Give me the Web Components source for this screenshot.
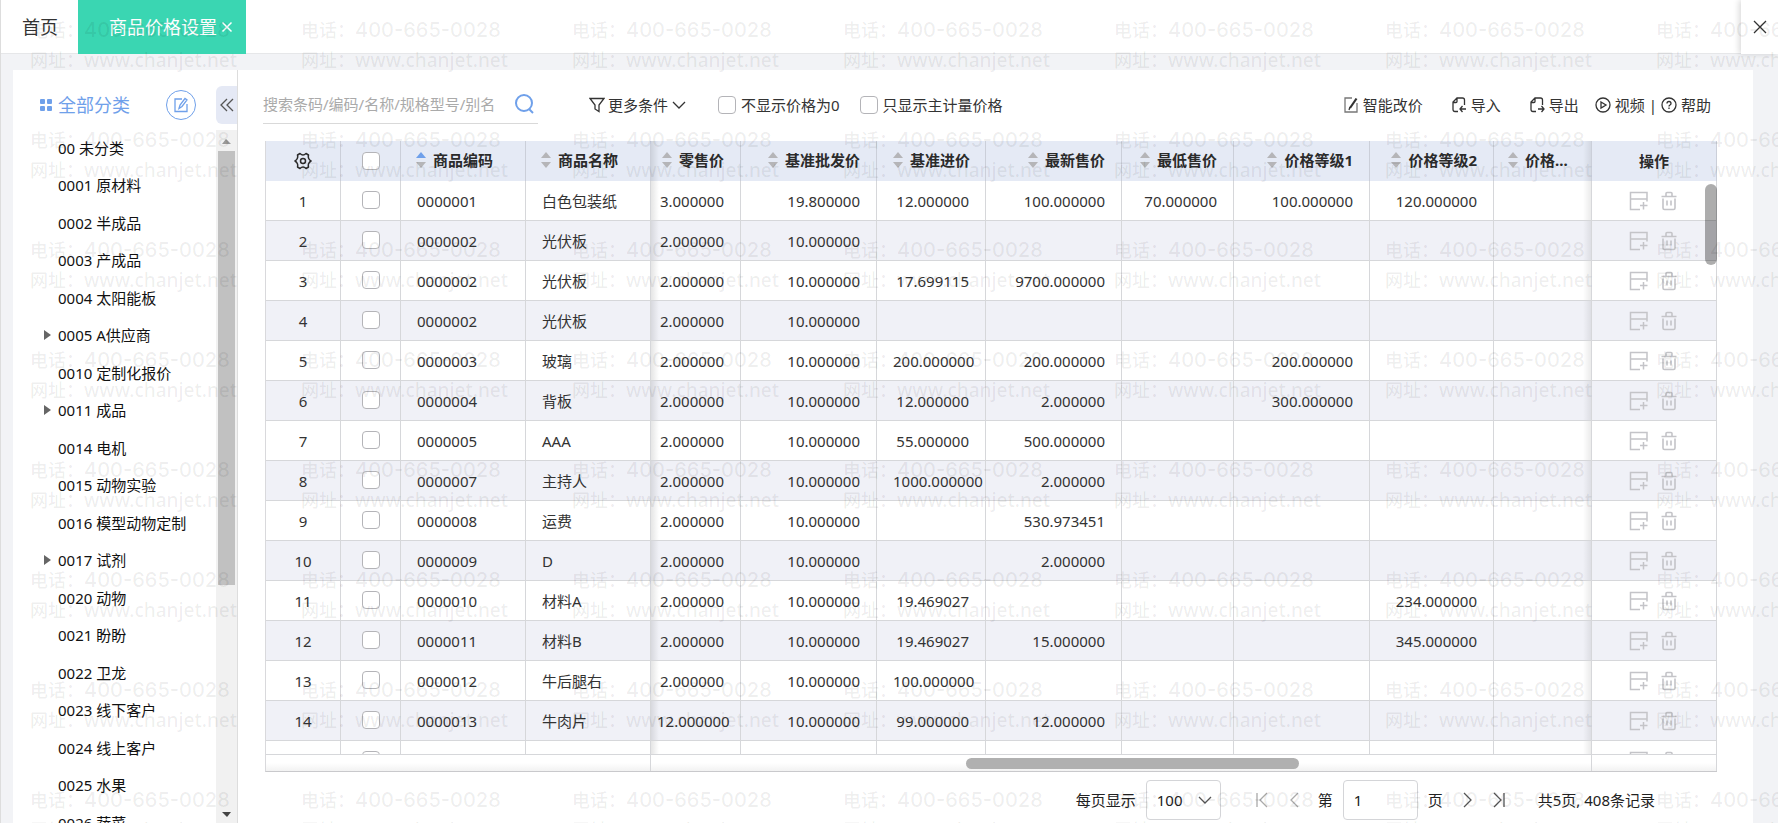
<!DOCTYPE html>
<html lang="zh-CN">
<head>
    <meta charset="UTF-8">
    <meta name="viewport" content="width=device-width, initial-scale=1.0">
    <title>商品价格设置</title>
    <style>
        body {
            margin: 0;
            height: 100vh;
            overflow: hidden;
            font: 15px/20px "Noto Sans", "Noto Sans CJK SC", sans-serif;
            color: #333;
        }
    </style>
</head>
<body>

<price-app></price-app>

<script>
const ICONS = {
    close: [16, '<path d="M2 2l12 12M14 2L2 14"/>'],
    grid: [12, '<g fill="currentColor" stroke="none"><rect width="5" height="5" rx="1"/><rect x="7" width="5" height="5" rx="1"/><rect y="7" width="5" height="5" rx="1"/><rect x="7" y="7" width="5" height="5" rx="1"/></g>'],
    edit: [16, '<path d="M9 2H2v12.500h12V7M6 11.500l1-3.500 5-6.500 2 1.500-5 6.500z"/>'],
    collapse: [16, '<path d="M8 2L2 8l6 6M14 2L8 8l6 6"/>'],
    search: [20, '<circle cx="10" cy="9" r="8"/><path d="M15 15l4 4"/>'],
    filter: [16, '<path d="M1 1.500h14L10 8v6.500L6 12V8z"/>'],
    down: [16, '<path d="M2 5l6 6 6-6"/>'],
    reprice: [16, '<path d="M9 1H2v14h12V6" stroke="#777"/><path stroke-width="2.200" d="M13.500 1.500L7 11"/><path d="M7 10l-1 3"/>'],
    import: [16, '<path d="M7 14.500H4q-2 0-2-2V5l4-4h5.500q2 0 2 2v5M2 5.500h3q1 0 1-1V1"/><path d="M15 12H9M11.500 9L9 12l2.500 3"/>'],
    export: [16, '<path d="M7 14.500H4q-2 0-2-2V5l4-4h5.500q2 0 2 2v5M2 5.500h3q1 0 1-1V1"/><path d="M9 12h6M12.500 9l2.500 3-2.500 3"/>'],
    video: [16, '<circle cx="8" cy="8" r="7"/><path d="M6 5l5 3-5 3z"/>'],
    help: [16, '<circle cx="8" cy="8" r="7"/><path d="M6 6.500q0-2 2-2t2 2q0 1-1 1.500t-1 1.500M8 10.500v1.500"/>'],
    gear: [18, '<path stroke-width="1.500" stroke-linejoin="round" d="M6 1.500q1.500 1.500 3 1.500t3-1.500L14.500 3q-.500 2 .200 3.500T17 9q-1.600 1-2.300 2.500t-.200 3.500L12 16.500Q10.500 15 9 15t-3 1.500L3.500 15q.500-2-.200-3.500T1 9q1.600-1 2.300-2.500T3.500 3z"/><circle stroke-width="1.500" cx="9" cy="9" r="2.500"/>'],
    addRow: [20, '<path stroke-width="1.500" d="M18 10.500V1.500H1.500v17H11M1.500 8H18M14.500 11v7.500M11 14.500h7.500"/>'],
    trash: [20, '<path stroke-width="1.600" d="M2.500 5.500h15M7 5V2.500q0-1 1-1h4q1 0 1 1V5M4 7.500V17q0 1.500 1.500 1.500h9Q16 18.500 16 17V7.500M8 9.500v5M12 9.500v5"/>'],
    first: [16, '<path d="M3 1v14M13 1L6 8l7 7"/>'],
    prev: [16, '<path d="M12 1L5 8l7 7"/>'],
    next: [16, '<path d="M5 1l7 7-7 7"/>'],
    last: [16, '<path d="M3 1l7 7-7 7M13 1v14"/>']
};

const icon = (name, size) => {
    const [box, body] = ICONS[name];
    return `<svg width="${size || box}" height="${size || box}" viewBox="0 0 ${box} ${box}" fill="none" stroke="currentColor" stroke-width="1.3" aria-hidden="true">${body}</svg>`;
};

// resets shared by every shadow root
const BASE = `
    * { box-sizing: border-box; }
    svg { display: block; flex: none; }
    button { font: inherit; color: inherit; background: none; border: 0; margin: 0; padding: 0; cursor: pointer; }
    a { color: inherit; text-decoration: none; }
    input[type=checkbox] { appearance: none; display: block; flex: none; width: 18px; height: 18px; margin: 0; border: 1px solid #b4b4b8; border-radius: 4px; background: #fff; }
    input[type=checkbox]:checked { background: #6fa0ea; }
`;

class BaseElement extends HTMLElement {
    constructor() {
        super();
        this.attachShadow({ mode: 'open' }).innerHTML = `<style>${BASE}${this.styles()}</style>${this.markup()}`;
    }
}

class CheckOption extends BaseElement {
    styles() {
        return `
            :host { display: block; }
            label { display: flex; align-items: center; gap: 5px; white-space: nowrap; }
        `;
    }
    markup() {
        return '<label><input type="checkbox"><slot></slot></label>';
    }
}

class ToolLink extends BaseElement {
    styles() {
        return `
            :host { display: block; }
            a { display: flex; align-items: center; gap: 4px; white-space: nowrap; }
        `;
    }
    markup() {
        return `<a href="#">${icon(this.getAttribute('icon'))}<slot></slot></a>`;
    }
}

class TabBar extends BaseElement {
    styles() {
        return `
            :host { display: flex; height: 54px; font-size: 18px; background: #fff; border-bottom: 1px solid #e6e7e9; }
            .home { display: flex; align-items: center; width: 77px; padding-left: 21px; }
            .tab { display: flex; align-items: center; gap: 4px; height: 54px; width: 168px; padding-left: 31px; background: #3ad6b2; color: #fff; white-space: nowrap; }
            .tab svg { stroke-width: 2; }
            .exit { display: grid; place-items: center; width: 37px; height: 54px; margin-left: auto; background: #fff; box-shadow: -2px 0 6px rgba(0, 0, 0, .15); }
        `;
    }
    markup() {
        return `
            <a class="home" href="#">首页</a>
            <div class="tab"><a href="#">商品价格设置</a><button aria-label="关闭标签">${icon('close', 12)}</button></div>
            <button class="exit" aria-label="退出">${icon('close')}</button>
        `;
    }
}

const CATEGORIES = [
    '00 未分类', '0001 原材料', '0002 半成品', '0003 产成品', '0004 太阳能板', '+0005 A供应商',
    '0010 定制化报价', '+0011 成品', '0014 电机', '0015 动物实验', '0016 模型动物定制', '+0017 试剂',
    '0020 动物', '0021 盼盼', '0022 卫龙', '0023 线下客户', '0024 线上客户', '0025 水果', '0026 蔬菜'
];

class CategoryTree extends BaseElement {
    styles() {
        return `
            :host { display: flex; flex-direction: column; width: 225px; flex: none; background: #fff; border-right: 1px solid #ddd; }
            header { display: flex; align-items: center; height: 60px; padding: 10px 0 0 27px; color: #6fa0ea; }
            h2 { flex: 1; margin: 0 0 0 6px; font-size: 18px; font-weight: 400; }
            .edit { display: grid; place-items: center; width: 30px; height: 30px; border: 1px solid; border-radius: 50%; margin-right: 20px; }
            .fold { display: grid; place-items: center; width: 21px; height: 38px; background: #e5e9f5; border-radius: 6px 0 0 6px; color: #555; }
            .body { display: flex; flex: 1; min-height: 0; }
            ul { flex: 1; display: grid; grid-auto-rows: 37px 38px; align-content: start; overflow: hidden; margin: 0; padding: 0 0 0 31px; list-style: none; color: #111; }
            li { display: grid; grid-template-columns: 14px 1fr; align-items: center; padding-bottom: 2px; white-space: nowrap; }
            li.more::before { content: ""; border: 5px solid transparent; border-left: 7px solid #666; border-right: 0; width: 0; }
            li a { grid-column: 2; }
            .bar { display: flex; flex-direction: column; width: 21px; background: #f1f1f1; }
            .thumb { flex: 2; margin: 0 2px; background: #c1c1c1; }
            .rest { flex: 1; }
        `;
    }
    markup() {
        const item = c => `<li${c[0] === '+' ? ' class="more"' : ''}><a href="#">${c.replace('+', '')}</a></li>`;
        return `
            <header>
                ${icon('grid')}
                <h2>全部分类</h2>
                <button class="edit" aria-label="编辑分类">${icon('edit')}</button>
                <button class="fold" aria-label="收起">${icon('collapse')}</button>
            </header>
            <div class="body">
                <ul>${CATEGORIES.map(item).join('')}</ul>
                <div class="bar">
                    <svg width="21" height="21"><path d="M6 14l4-5 5 5z" fill="#999"/></svg>
                    <div class="thumb"></div>
                    <div class="rest"></div>
                    <svg width="21" height="21"><path d="M6 10h9l-4 5z" fill="#444"/></svg>
                </div>
            </div>
        `;
    }
}

class GridToolbar extends BaseElement {
    styles() {
        return `
            :host { display: flex; align-items: center; height: 71px; padding-bottom: 2px; flex: none; }
            .search { display: flex; align-items: center; width: 275px; height: 38px; border-bottom: 1px solid #d9d9d9; }
            .search input { flex: 1; min-width: 0; padding: 0; border: 0; outline: 0; background: none; font: inherit; color: inherit; }
            .search input::placeholder { color: #aaa; opacity: 1; }
            .search button { margin-right: 4px; color: #6fa0ea; }
            .search svg { stroke-width: 2; }
            .filter { display: flex; align-items: center; gap: 3px; margin: 0 31px 0 51px; white-space: nowrap; }
            check-option { margin-right: 20px; }
            .links { display: flex; align-items: center; gap: 28px; margin-left: auto; }
            .support { display: flex; align-items: center; gap: 4px; margin-left: -12px; }
        `;
    }
    markup() {
        return `
            <div class="search"><input type="text" aria-label="搜索" placeholder="搜索条码/编码/名称/规格型号/别名"><button aria-label="搜索">${icon('search')}</button></div>
            <button class="filter">${icon('filter')}更多条件${icon('down')}</button>
            <check-option>不显示价格为0</check-option>
            <check-option>只显示主计量价格</check-option>
            <div class="links">
                <tool-link icon="reprice">智能改价</tool-link>
                <tool-link icon="import">导入</tool-link>
                <tool-link icon="export">导出</tool-link>
                <div class="support"><tool-link icon="video">视频</tool-link>|<tool-link icon="help">帮助</tool-link></div>
            </div>
        `;
    }
}

// label, column width
const COLUMNS = [
    ['商品编码', 125], ['商品名称', 125], ['零售价', 90], ['基准批发价', 136], ['基准进价', 109],
    ['最新售价', 136], ['最低售价', 112], ['价格等级1', 136], ['价格等级2', 124], ['价格...', 98]
];

const ROWS = [
    ['0000001', '白色包装纸', '3.000000', '19.800000', '12.000000', '100.000000', '70.000000', '100.000000', '120.000000'],
    ['0000002', '光伏板', '2.000000', '10.000000'],
    ['0000002', '光伏板', '2.000000', '10.000000', '17.699115', '9700.000000'],
    ['0000002', '光伏板', '2.000000', '10.000000'],
    ['0000003', '玻璃', '2.000000', '10.000000', '200.000000', '200.000000', '', '200.000000'],
    ['0000004', '背板', '2.000000', '10.000000', '12.000000', '2.000000', '', '300.000000'],
    ['0000005', 'AAA', '2.000000', '10.000000', '55.000000', '500.000000'],
    ['0000007', '主持人', '2.000000', '10.000000', '1000.000000', '2.000000'],
    ['0000008', '运费', '2.000000', '10.000000', '', '530.973451'],
    ['0000009', 'D', '2.000000', '10.000000', '', '2.000000'],
    ['0000010', '材料A', '2.000000', '10.000000', '19.469027', '', '', '', '234.000000'],
    ['0000011', '材料B', '2.000000', '10.000000', '19.469027', '15.000000', '', '', '345.000000'],
    ['0000012', '牛后腿右', '2.000000', '10.000000', '100.000000'],
    ['0000013', '牛肉片', '12.000000', '10.000000', '99.000000', '12.000000'],
    []
];

class PriceGrid extends BaseElement {
    styles() {
        return `
            :host { position: relative; display: flex; flex-direction: column; flex: 1; min-height: 0; border-left: 1px solid #d9d9dc; border-bottom: 1px solid #c9c9cc; }
            .view { flex: 1; min-height: 0; overflow: hidden; }
            table { width: 100%; table-layout: fixed; border-collapse: separate; border-spacing: 0; }
            th, td { height: 40px; padding: 0 16px; border-right: 1px solid #d6d7da; white-space: nowrap; text-align: right; }
            th { background-color: #e5eaf5; border-color: #cbcfd9; color: #2b2b2b; font-weight: 700; }
            td { border-bottom: 1px solid #d6d7da; }
            tr:nth-child(even) td { background-color: #f0f1f7; }
            th:nth-child(-n+2), td:nth-child(-n+2), th:last-child, td:last-child { padding-left: 0; padding-right: 0; text-align: center; }
            td:nth-child(2) { padding-bottom: 2px; }
            th:nth-child(3), th:nth-child(4), td:nth-child(3), td:nth-child(4) { padding-right: 0; text-align: left; }
            th:nth-child(3), th:nth-child(4) { padding-left: 15px; }
            th:nth-child(5), td:nth-child(5) { padding-left: 6px; background-image: linear-gradient(to right, rgba(0, 0, 0, .1), transparent 8px); }
            th:nth-child(12), td:nth-child(12) { padding-left: 14px; padding-right: 0; text-align: left; background-image: linear-gradient(to left, rgba(0, 0, 0, .08), transparent 8px); }
            input[type=checkbox] { margin: 0 auto; }
            .gear { display: block; margin: 0 auto; }
            .sort { display: inline-flex; align-items: center; gap: 7px; font-weight: 700; }
            .actions { display: flex; justify-content: center; gap: 10px; color: #c4c4c8; }
            .strip { display: grid; grid-template-columns: 385px 1fr 125px; height: 17px; flex: none; border-top: 1px solid #d6d7da; background: linear-gradient(#fff 50%, #f2f2f2); }
            .strip > div { display: flex; align-items: center; border-right: 1px solid #d6d7da; }
            .strip i { height: 11px; border-radius: 6px; }
            .thumb { background: #b0b0b0; }
            .vthumb { position: absolute; top: 43px; right: 0; width: 12px; height: 81px; border-radius: 6px; background: rgba(0, 0, 0, .32); }
        `;
    }
    markup() {
        const sort = ([label], i) => `
            <th scope="col"><button class="sort"><svg width="10" height="16" viewBox="0 0 10 16"><path d="M5 0l5 6H0z" fill="${i ? '#b5b5b8' : '#6fa0ea'}"/><path d="M0 10h10l-5 6z" fill="#b5b5b8"/></svg>${label}</button></th>`;
        const row = (cells, i) => `
            <tr>
                <td>${cells.length ? i + 1 : ''}</td>
                <td><input type="checkbox" aria-label="选择"></td>
                ${COLUMNS.map((c, n) => `<td>${cells[n] || ''}</td>`).join('')}
                <td><div class="actions"><button aria-label="增行">${icon('addRow')}</button><button aria-label="删除">${icon('trash')}</button></div></td>
            </tr>`;
        return `
            <div class="view">
                <table>
                    <colgroup>${[75, 60, ...COLUMNS.map(c => c[1]), 125].map(w => `<col style="width: ${w}px">`).join('')}</colgroup>
                    <thead>
                        <tr>
                            <th><button class="gear" aria-label="列设置">${icon('gear')}</button></th>
                            <th><input type="checkbox" aria-label="全选"></th>
                            ${COLUMNS.map(sort).join('')}
                            <th scope="col">操作</th>
                        </tr>
                    </thead>
                    <tbody>${ROWS.map(row).join('')}</tbody>
                </table>
            </div>
            <div class="strip">
                <div></div>
                <div><i style="flex: 315"></i><i class="thumb" style="flex: 334"></i><i style="flex: 292"></i></div>
                <div></div>
            </div>
            <div class="vthumb"></div>
        `;
    }
}

class PageBar extends BaseElement {
    styles() {
        return `
            :host { display: flex; align-items: center; justify-content: flex-end; gap: 10px; padding: 8px 62px 3px 0; flex: none; white-space: nowrap; color: #222; }
            .size { display: grid; align-items: center; width: 75px; margin-right: 20px; }
            .size > * { grid-area: 1 / 1; }
            .size svg { justify-self: end; margin-right: 8px; pointer-events: none; color: #555; }
            select, input { width: 75px; height: 40px; padding: 0 10px; border: 1px solid #d4d5d8; border-radius: 4px; appearance: none; background: #fff; font: inherit; color: inherit; }
            button { color: #555; margin: 0 3px; }
            button:disabled { color: #aaa; }
            .before { margin-left: 3px; }
            .after { margin-right: 3px; }
            .total { margin-left: 18px; }
        `;
    }
    markup() {
        return `
            <label for="size">每页显示</label>
            <div class="size"><select id="size"><option>100</option></select>${icon('down')}</div>
            <button disabled aria-label="首页">${icon('first')}</button>
            <button disabled aria-label="上一页">${icon('prev')}</button>
            <label class="before" for="page">第</label>
            <input id="page" type="text" value="1">
            <span class="after">页</span>
            <button aria-label="下一页">${icon('next')}</button>
            <button aria-label="末页">${icon('last')}</button>
            <span class="total">共5页, 408条记录</span>
        `;
    }
}

class WaterMark extends BaseElement {
    styles() {
        return `
            :host { position: absolute; inset: 0; overflow: hidden; pointer-events: none; display: grid; grid-template-columns: repeat(7, 271px); grid-auto-rows: 110px; padding: 15px 0 0 29px; font-size: 18px; line-height: 30px; font-weight: 500; color: rgba(0, 0, 0, .07); }
            div { white-space: nowrap; }
            .tel { font-family: Inter, sans-serif; font-size: 20px; }
            .web { font-size: 19px; }
        `;
    }
    markup() {
        return '<div>电话：<span class="tel">400-665-0028</span><br>网址：<span class="web">www.chanjet.net</span></div>'.repeat(56);
    }
}

class PriceApp extends BaseElement {
    styles() {
        return `
            :host { position: relative; display: flex; flex-direction: column; height: 100%; overflow: hidden; background: #f2f3f6; border-left: 1px solid #ddd; box-sizing: border-box; }
            main { display: flex; flex: 1; min-height: 0; padding: 16px 25px 0 12px; }
            section { display: flex; flex-direction: column; flex: 1; min-width: 0; padding: 0 36px 0 27px; background: #fff; }
            grid-toolbar { margin: 0 6px 0 -2px; }
        `;
    }
    markup() {
        return `
            <tab-bar></tab-bar>
            <main>
                <category-tree></category-tree>
                <section>
                    <grid-toolbar></grid-toolbar>
                    <price-grid></price-grid>
                    <page-bar></page-bar>
                </section>
            </main>
            <water-mark aria-hidden="true"></water-mark>
        `;
    }
}

customElements.define('check-option', CheckOption);
customElements.define('tool-link', ToolLink);
customElements.define('tab-bar', TabBar);
customElements.define('category-tree', CategoryTree);
customElements.define('grid-toolbar', GridToolbar);
customElements.define('price-grid', PriceGrid);
customElements.define('page-bar', PageBar);
customElements.define('water-mark', WaterMark);
customElements.define('price-app', PriceApp);
</script>

</body>
</html>
